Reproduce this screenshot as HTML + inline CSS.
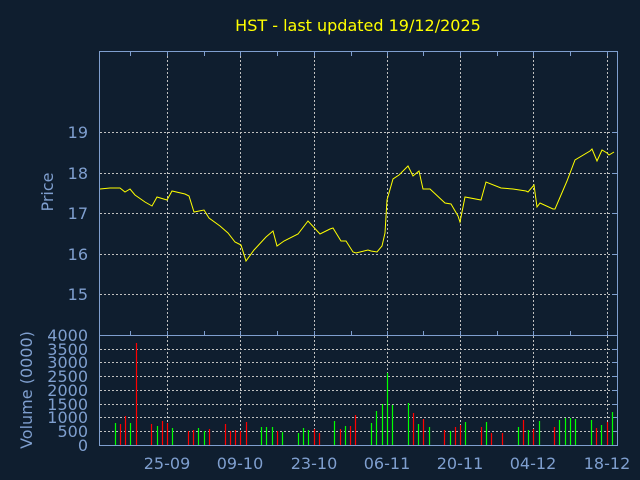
<!DOCTYPE html>
<html><head><meta charset="utf-8"><style>
html,body{margin:0;padding:0;background:#0f1e2f;}
svg{display:block;}
text{font-family:"DejaVu Sans","Liberation Sans",sans-serif;}
</style></head><body>
<svg width="640" height="480" viewBox="0 0 640 480" xmlns="http://www.w3.org/2000/svg">
<rect width="640" height="480" fill="#0f1e2f"/>
<text x="358" y="31" fill="#ffff00" font-size="16" text-anchor="middle">HST - last updated 19/12/2025</text>
<g stroke="#c0c0c0" stroke-width="1" stroke-dasharray="2,2" fill="none">
<path d="M100 132.5H617M100 173.5H617M100 213.5H617M100 254.5H617M100 294.5H617"/>
<path d="M100 349.5H617M100 362.5H617M100 376.5H617M100 390.5H617M100 404.5H617M100 417.5H617M100 431.5H617"/>
<path d="M167.5 52V445M240.5 52V445M314.5 52V445M387.5 52V445M460.5 52V445M533.5 52V445M607.5 52V445"/>
</g>
<g stroke="#7f9fcf" stroke-width="1" fill="none">
<rect x="99.5" y="51.5" width="518" height="394"/>
<path d="M99.5 335.5H617.5"/>
<path d="M130.5 52v4M204.5 52v4M277.5 52v4M351.5 52v4M423.5 52v4M497.5 52v4M570.5 52v4"/>
<path d="M130.5 335v-4M204.5 335v-4M277.5 335v-4M351.5 335v-4M423.5 335v-4M497.5 335v-4M570.5 335v-4"/>
<path d="M167.5 335v-4M240.5 335v-4M314.5 335v-4M387.5 335v-4M460.5 335v-4M533.5 335v-4M607.5 335v-4"/>
<path d="M167.5 52v4M240.5 52v4M314.5 52v4M387.5 52v4M460.5 52v4M533.5 52v4M607.5 52v4"/>
<path d="M617 132.5h-5M617 173.5h-5M617 213.5h-5M617 254.5h-5M617 294.5h-5M617 349.5h-5M617 362.5h-5M617 376.5h-5M617 390.5h-5M617 404.5h-5M617 417.5h-5M617 431.5h-5"/>
</g>
<g fill="#7f9fcf" font-size="16" text-anchor="end">
<text x="88" y="138">19</text><text x="88" y="179">18</text><text x="88" y="219">17</text><text x="88" y="260">16</text><text x="88" y="300">15</text>
<text x="88" y="341">4000</text><text x="88" y="355">3500</text><text x="88" y="368">3000</text><text x="88" y="382">2500</text><text x="88" y="396">2000</text><text x="88" y="410">1500</text><text x="88" y="423">1000</text><text x="88" y="437">500</text><text x="88" y="451">0</text>
</g>
<g fill="#7f9fcf" font-size="16" text-anchor="middle">
<text x="167" y="469">25-09</text><text x="240" y="469">09-10</text><text x="314" y="469">23-10</text><text x="387" y="469">06-11</text><text x="460" y="469">20-11</text><text x="533" y="469">04-12</text><text x="607" y="469">18-12</text>
</g>
<text transform="translate(53,192) rotate(-90)" fill="#7f9fcf" font-size="16" text-anchor="middle">Price</text>
<text transform="translate(32,390) rotate(-90)" fill="#7f9fcf" font-size="16" text-anchor="middle">Volume (0000)</text>
<polyline fill="none" stroke="#ffff00" stroke-width="1" points="100,189 110,188 120,188 125,192 130,189 135,195 145,202 152,206 157,197 167,200 172,191 185,194 189,196 194,212 204,210 209,218 220,226 228,233 235,242 241,245 246,261 254,250 266,237 273,231 277,246 284,241 298,234 308,221 320,234 330,229 333,228 341,241 346,241 353,252 356,253 368,250 371,251 377,252 382,246 385,233 387,200 393,179 399,175 408,166 413,176 419,171 423,189 430,189 445,203 451,204 458,216 460,222 465,197 481,200 486,182 501,188 513,189 526,191 528,192 534,185 537,207 540,203 553,209 555,209 567,181 575,160 590,151 592,149 597,161 602,150 607,153 609,155 614,152"/>
<g stroke="#00ff00" stroke-width="1.2">
<path d="M115.5 445V423M130.5 445V423M157.5 445V426M172.5 445V428M198.5 445V428M204.5 445V431M261.5 445V427M266.5 445V427M272.5 445V427M282.5 445V432M298.5 445V433M303.5 445V428M308.5 445V430M334.5 445V421M345.5 445V426M371.5 445V423M376.5 445V411M382.5 445V404M387.5 445V373M392.5 445V405M408.5 445V403M418.5 445V424M429.5 445V427M450.5 445V431M465.5 445V422M486.5 445V422M518.5 445V427M528.5 445V430M539.5 445V421M559.5 445V420M565.5 445V418M570.5 445V418M575.5 445V419M591.5 445V420M601.5 445V425M612.5 445V412"/>
</g>
<g stroke="#ff0000" stroke-width="1.2">
<path d="M120.5 445V424M125.5 445V416M136.5 445V343M151.5 445V424M162.5 445V421M167.5 445V423M188.5 445V431M193.5 445V430M209.5 445V429M225.5 445V424M230.5 445V431M235.5 445V430M240.5 445V431M246.5 445V422M277.5 445V431M314.5 445V429M319.5 445V433M340.5 445V429M350.5 445V426M355.5 445V415M413.5 445V413M423.5 445V419M444.5 445V430M455.5 445V427M460.5 445V425M481.5 445V427M491.5 445V433M502.5 445V433M523.5 445V420M533.5 445V429M554.5 445V427M596.5 445V428M607.5 445V422"/>
</g>
</svg>
</body></html>
